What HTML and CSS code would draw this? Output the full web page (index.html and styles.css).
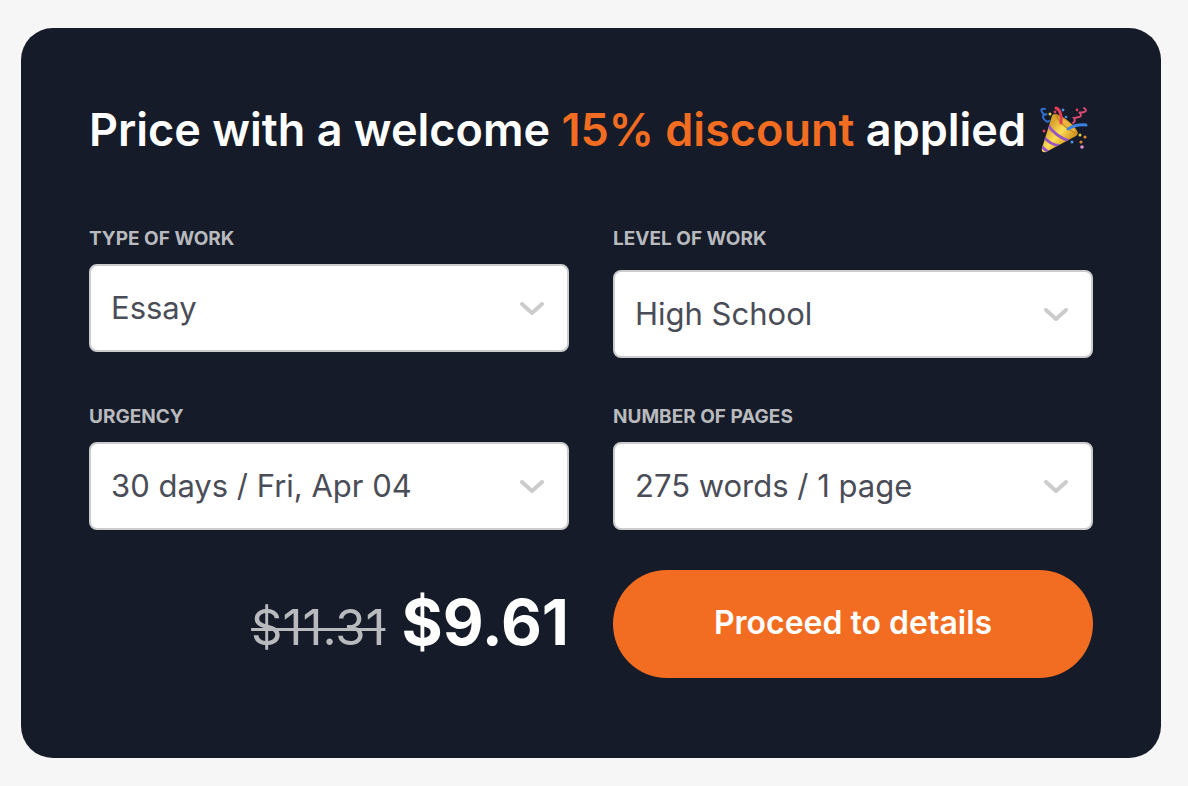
FILE: index.html
```
<!DOCTYPE html>
<html lang="en">
<head>
  <meta charset="UTF-8">
  <meta name="viewport" content="width=device-width, initial-scale=1.0">
  <title>Price calculator</title>
  <link rel="stylesheet" href="styles.css">
</head>
<body>
  <form class="calculator">
    <h1 class="title">
      <span>Price with a welcome <span class="discount">15% discount</span> applied</span>
      <svg class="party" viewBox="0 0 48 48" fill="none" stroke-linecap="round" aria-hidden="true">
        <defs>
          <linearGradient id="cone" x1="8" y1="22" x2="26" y2="38" gradientUnits="userSpaceOnUse">
            <stop offset="0" stop-color="#d9a52f"/>
            <stop offset="0.5" stop-color="#ffdf55"/>
            <stop offset="1" stop-color="#d69a24"/>
          </linearGradient>
          <clipPath id="coneShape">
            <path d="M12 10C13 6 21 9 28 15C35 21 40 27 36 30L6 46C3 47 1 45 2 42Z"/>
          </clipPath>
        </defs>
        <g clip-path="url(#coneShape)">
          <path fill="url(#cone)" d="M0 0H48V48H0Z"/>
          <path stroke="#9a55c4" stroke-width="3" d="M8 19Q15 30 29 35M4 31Q9 38 20 40M1 39Q3 43 9 46"/>
        </g>
        <path fill="#c68a22" d="M14 8C20 7 38 21 38 28C31 27 19 18 14 8Z"/>
        <path fill="#eeb63c" d="M18 11C23 11 35 20 36 26C29 24 22 18 18 11Z"/>
        <path stroke="#e33c58" stroke-width="3" d="M16 2Q22 4 21 17"/>
        <path stroke="#3c82e3" stroke-width="3" d="M28 23Q36 18 46 19"/>
        <path stroke="#2f6fd0" stroke-width="2" d="M5 3Q0 2 2 6T7 8Q1 9 4 13T9 15"/>
        <path stroke="#d84872" stroke-width="2" d="M44 2Q48 5 44 6T39 6Q43 10 39 11T34 12Q36 15 33 17"/>
        <g fill="#4a90e2">
          <circle cx="23" cy="4" r="1.4"/>
          <circle cx="26" cy="11" r="1.3"/>
          <circle cx="32" cy="36" r="1.5"/>
        </g>
        <g fill="#e33c62">
          <circle cx="15" cy="6" r="1.4"/>
          <circle cx="37" cy="4" r="1.4"/>
          <circle cx="4" cy="25" r="1.5"/>
        </g>
        <g fill="#e9cf45">
          <circle cx="10" cy="8" r="1.5"/>
          <circle cx="40" cy="29" r="1.5"/>
        </g>
        <g fill="#d98a32">
          <circle cx="45" cy="31" r="1.6"/>
          <circle cx="41" cy="36" r="1.6"/>
        </g>
        <circle fill="#e58bd0" cx="42" cy="41" r="1.8"/>
      </svg>
    </h1>

    <div class="fields">
      <div class="field">
        <label for="type">Type of work</label>
        <div class="select">
          <select id="type"><option>Essay</option></select>
          <svg viewBox="0 0 24 14" aria-hidden="true"><path d="M2 2l10 9L22 2"/></svg>
        </div>
      </div>
      <div class="field field-level">
        <label for="level">Level of work</label>
        <div class="select">
          <select id="level"><option>High School</option></select>
          <svg viewBox="0 0 24 14" aria-hidden="true"><path d="M2 2l10 9L22 2"/></svg>
        </div>
      </div>
      <div class="field">
        <label for="urgency">Urgency</label>
        <div class="select">
          <select id="urgency"><option>30 days / Fri, Apr 04</option></select>
          <svg viewBox="0 0 24 14" aria-hidden="true"><path d="M2 2l10 9L22 2"/></svg>
        </div>
      </div>
      <div class="field">
        <label for="pages">Number of pages</label>
        <div class="select">
          <select id="pages"><option>275 words / 1 page</option></select>
          <svg viewBox="0 0 24 14" aria-hidden="true"><path d="M2 2l10 9L22 2"/></svg>
        </div>
      </div>
    </div>

    <div class="checkout">
      <div class="price">
        <del class="old-price">$11.31</del>
        <strong class="new-price">$9.61</strong>
      </div>
      <button class="proceed" type="submit">Proceed to details</button>
    </div>
  </form>
</body>
</html>
```
FILE: styles.css
```
* {
  box-sizing: border-box;
}
body {
  margin: 0;
  padding: 28px 27px 28px 21px;
  background: #f6f6f6;
  font-family: Inter, Roboto, sans-serif;
}
.calculator {
  padding: 76px 68px 80px;
  background: #151b28;
  border-radius: 32px;
}
.title {
  display: flex;
  align-items: center;
  gap: 14px;
  margin: 0 0 71px;
  color: #fff;
  font-size: 45px;
  font-weight: 600;
  line-height: 52px;
  white-space: nowrap;
}
.discount {
  color: #f26c21;
}
.party {
  flex: none;
  width: 48px;
  height: 48px;
}
.fields,
.checkout {
  display: grid;
  grid-template-columns: 1fr 1fr;
  column-gap: 44px;
}
.fields {
  row-gap: 47px;
}
.field {
  display: flex;
  flex-direction: column;
  gap: 13px;
}
.field-level {
  gap: 19px;
}
.field label {
  color: #b9babe;
  font-size: 19px;
  font-weight: 700;
  line-height: 24px;
  text-transform: uppercase;
}
.select {
  position: relative;
}
.select select {
  display: block;
  width: 100%;
  height: 88px;
  padding: 0 60px 2px 20px;
  appearance: none;
  background: #fff;
  border: 2px solid #ccc;
  border-radius: 8px;
  color: #4a4d57;
  font-family: inherit;
  font-size: 31px;
}
.select svg {
  position: absolute;
  top: 38px;
  right: 25px;
  width: 24px;
  height: 14px;
  fill: none;
  stroke: #ccc;
  stroke-width: 4;
  stroke-linecap: round;
  stroke-linejoin: round;
  pointer-events: none;
}
.checkout {
  align-items: center;
  margin-top: 40px;
}
.price {
  display: flex;
  align-items: baseline;
  justify-content: flex-end;
  gap: 16px;
  padding-bottom: 4px;
}
.old-price {
  color: #b9babe;
  font-size: 49px;
  text-decoration-thickness: 3px;
}
.new-price {
  color: #fff;
  font-size: 63px;
  font-weight: 700;
}
.proceed {
  height: 108px;
  padding-bottom: 4px;
  background: #f26c21;
  border: none;
  border-radius: 54px;
  color: #fff;
  font-family: inherit;
  font-size: 32px;
  font-weight: 600;
  cursor: pointer;
}
```
